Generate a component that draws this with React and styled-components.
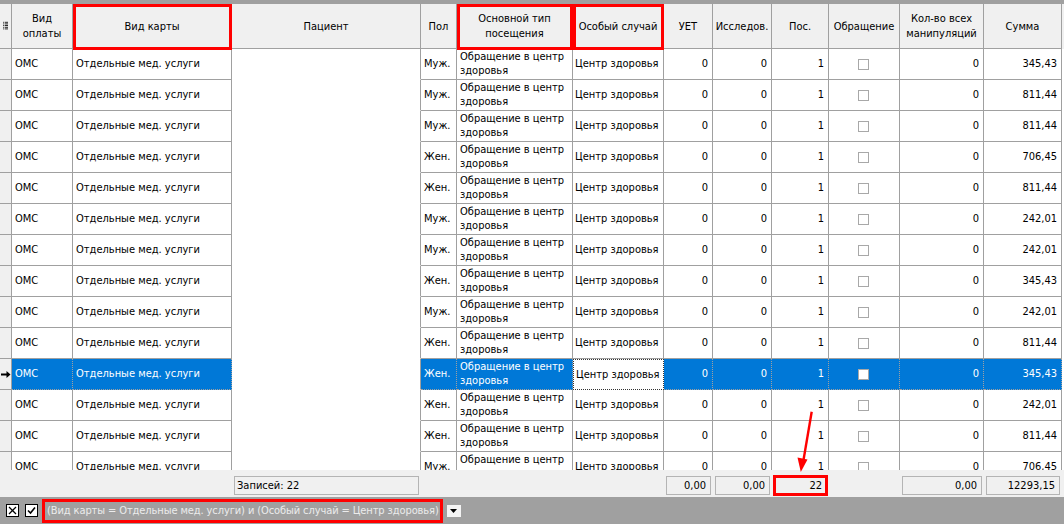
import React from 'react';
import styled, { createGlobalStyle } from 'styled-components';

const COLS = '12px 61px 159px 189px 36px 116px 91px 49px 59px 57px 71px 84px 78px';
const LINE = '#a0a0a0';
const BLUE = '#0078d7';

const GlobalStyle = createGlobalStyle`
  html, body { margin: 0; padding: 0; }
  body {
    font-family: "DejaVu Sans Condensed", "Liberation Sans", sans-serif;
    font-size: 11px;
    color: #000;
    background: #a0a0a0;
  }
`;

const rows = [
  { sex: 'Муж.', sum: '345,43' },
  { sex: 'Муж.', sum: '811,44' },
  { sex: 'Муж.', sum: '811,44' },
  { sex: 'Жен.', sum: '706,45' },
  { sex: 'Жен.', sum: '811,44' },
  { sex: 'Муж.', sum: '242,01' },
  { sex: 'Муж.', sum: '242,01' },
  { sex: 'Жен.', sum: '345,43' },
  { sex: 'Муж.', sum: '242,01' },
  { sex: 'Жен.', sum: '811,44' },
  { sex: 'Жен.', sum: '345,43', selected: true },
  { sex: 'Жен.', sum: '242,01' },
  { sex: 'Жен.', sum: '811,44' },
  { sex: 'Муж.', sum: '706,45' },
];

const Window = styled.div`
  position: relative;
  width: 1064px;
  height: 524px;
  padding-top: 4px;
  box-sizing: border-box;
  display: flex;
  flex-direction: column;
  background: #a0a0a0;
  overflow: hidden;
`;

const GridArea = styled.div`
  flex: 1;
  min-height: 0;
  overflow: hidden;
  background: #f0f0f0;
`;

const HeaderRow = styled.div`
  display: grid;
  grid-template-columns: ${COLS};
  height: 45px;
`;

const HeadCell = styled.div`
  position: relative;
  box-sizing: border-box;
  display: flex;
  align-items: center;
  justify-content: center;
  text-align: center;
  line-height: 15px;
  padding: 0 3px;
  white-space: pre-line;
  background: #f0f0f0;
  border-right: 1px solid ${LINE};
  border-bottom: 1px solid ${LINE};

  ${(p) => p.$marked && `
    &::after {
      content: '';
      position: absolute;
      top: 0;
      left: 0;
      right: -1px;
      bottom: -2px;
      border: 3px solid #f00;
    }
  `}
`;

const BodyRow = styled.div`
  display: grid;
  grid-template-columns: ${COLS};
  height: 31px;
  background: #fff;
`;

const Cell = styled.div`
  box-sizing: border-box;
  display: flex;
  align-items: center;
  justify-content: ${(p) => (p.$align === 'right' ? 'flex-end' : p.$align === 'center' ? 'center' : 'flex-start')};
  padding: 0 4px 0 3px;
  line-height: 14px;
  white-space: ${(p) => (p.$nowrap ? 'nowrap' : 'pre-line')};
  overflow: hidden;
  background: ${(p) => (p.$selected ? BLUE : '#fff')};
  color: ${(p) => (p.$selected ? '#fff' : '#000')};
  border-right: 1px ${(p) => (p.$selected ? 'dotted' : 'solid')} ${LINE};
  border-bottom: 1px ${(p) => (p.$selected ? 'dotted' : 'solid')} ${LINE};
`;

const Indicator = styled(Cell)`
  background: #f0f0f0;
  border-right-style: solid;
  border-bottom-style: solid;
  padding: 0 0 0 1px;
`;

const BlankCell = styled(Cell)`
  background: #fff;
  border-bottom-color: #fff;
`;

const FocusCell = styled(Cell)`
  background: #fff;
  color: #000;
  border: 1px dotted #333;
  padding-left: 2px;
`;

const CheckBox = styled.span`
  width: 11px;
  height: 11px;
  box-sizing: border-box;
  border: 1px solid #a8a8a8;
  background: #fff;
`;

const Footer = styled.div`
  display: grid;
  grid-template-columns: ${COLS};
  height: 27px;
  padding-top: 6px;
  box-sizing: border-box;
  background: #f0f0f0;
`;

const Total = styled.div`
  box-sizing: border-box;
  height: 19px;
  margin: 0 2px;
  display: flex;
  align-items: center;
  justify-content: ${(p) => (p.$left ? 'flex-start' : 'flex-end')};
  padding: 0 4px 0 2px;
  border: 1px solid #b4b4b4;
  background: #f0f0f0;

  ${(p) => p.$marked && `
    margin: -1px 1px 0 1px;
    height: 21px;
    border: 3px solid #f00;
    padding-right: 3px;
  `}
`;

const FilterBar = styled.div`
  height: 27px;
  display: flex;
  align-items: center;
  padding-left: 6px;
  background: #a0a0a0;
`;

const Toggle = styled.span`
  width: 13px;
  height: 13px;
  box-sizing: border-box;
  border: 1px solid #000;
  background: #fff;
  display: flex;
  align-items: center;
  justify-content: center;
  margin-right: ${(p) => p.$gap}px;
`;

const FilterText = styled.div`
  height: 24px;
  box-sizing: border-box;
  border: 3px solid #f00;
  display: flex;
  align-items: center;
  padding: 0 1px 0 2px;
  color: #ececec;
  white-space: nowrap;
  letter-spacing: -0.1px;
`;

const DropButton = styled.span`
  width: 14px;
  height: 12px;
  margin-left: 4px;
  background: #f4f4f4;
  display: flex;
  align-items: center;
  justify-content: center;
`;

const Annotation = styled.svg`
  position: absolute;
  left: 790px;
  top: 405px;
  pointer-events: none;
`;

const ColumnIcon = () => (
  <svg width="6" height="10" viewBox="0 0 6 10">
    {[0, 2, 4, 6, 8].map((y) => (
      <g key={y} fill="#000">
        <rect x="0" y={y} width="1" height="1" />
        <rect x="2" y={y} width="4" height="1" />
      </g>
    ))}
  </svg>
);

const RowArrow = () => (
  <svg width="10" height="7" viewBox="0 0 10 7">
    <path d="M0 3.5h7" stroke="#000" strokeWidth="2" />
    <path d="M5.5 0 L9.5 3.5 L5.5 7 Z" fill="#000" />
  </svg>
);

const heads = [
  { t: '', icon: true },
  { t: 'Вид\nоплаты' },
  { t: 'Вид карты', marked: true },
  { t: 'Пациент' },
  { t: 'Пол' },
  { t: 'Основной тип\nпосещения', marked: true },
  { t: 'Особый случай', marked: true },
  { t: 'УЕТ' },
  { t: 'Исследов.' },
  { t: 'Пос.' },
  { t: 'Обращение' },
  { t: 'Кол-во всех\nманипуляций' },
  { t: 'Сумма' },
];

const totals = [null, null, null, { t: 'Записей: 22', left: true }, null, null, null,
  { t: '0,00' }, { t: '0,00' }, { t: '22', marked: true }, null, { t: '0,00' }, { t: '12293,15' }];

const App = () => {
  return (
    <Window>
      <GlobalStyle />
      <GridArea>
        <HeaderRow>
          {heads.map((h, i) => (
            <HeadCell key={i} $marked={h.marked}>
              {h.icon ? <ColumnIcon /> : h.t}
            </HeadCell>
          ))}
        </HeaderRow>
        {rows.map((r, i) => {
          const s = r.selected;
          return (
            <BodyRow key={i}>
              <Indicator>{s && <RowArrow />}</Indicator>
              <Cell $selected={s}>ОМС</Cell>
              <Cell $selected={s}>Отдельные мед. услуги</Cell>
              <BlankCell />
              <Cell $selected={s}>{r.sex}</Cell>
              <Cell $selected={s}>{'Обращение в центр\nздоровья'}</Cell>
              {s ? <FocusCell $nowrap>Центр здоровья</FocusCell> : <Cell $nowrap style={{ paddingLeft: 2 }}>Центр здоровья</Cell>}
              <Cell $selected={s} $align="right">0</Cell>
              <Cell $selected={s} $align="right">0</Cell>
              <Cell $selected={s} $align="right">1</Cell>
              <Cell $selected={s} $align="center"><CheckBox /></Cell>
              <Cell $selected={s} $align="right">0</Cell>
              <Cell $selected={s} $align="right">{r.sum}</Cell>
            </BodyRow>
          );
        })}
      </GridArea>
      <Footer>
        {totals.map((c, i) =>
          c ? <Total key={i} $left={c.left} $marked={c.marked}>{c.t}</Total> : <span key={i} />
        )}
      </Footer>
      <FilterBar>
        <Toggle $gap={6}>
          <svg width="9" height="9" viewBox="0 0 9 9">
            <path d="M1 1L8 8M8 1L1 8" stroke="#000" strokeWidth="1.3" />
          </svg>
        </Toggle>
        <Toggle $gap={4}>
          <svg width="9" height="9" viewBox="0 0 9 9">
            <path d="M1 4.5L3.5 7L8 1.5" stroke="#000" strokeWidth="1.6" fill="none" />
          </svg>
        </Toggle>
        <FilterText>(Вид карты = Отдельные мед. услуги) и (Особый случай = Центр здоровья)</FilterText>
        <DropButton>
          <svg width="7" height="4" viewBox="0 0 7 4">
            <path d="M0 0H7L3.5 4Z" fill="#000" />
          </svg>
        </DropButton>
      </FilterBar>
      <Annotation width="30" height="70" viewBox="790 405 30 70">
        <path d="M811.7 411.7 L803.5 460" stroke="#f00" strokeWidth="2.4" />
        <path d="M797.5 457.5 L807.5 459.5 L800.8 472 Z" fill="#f00" />
      </Annotation>
    </Window>
  );
};

export default App;
